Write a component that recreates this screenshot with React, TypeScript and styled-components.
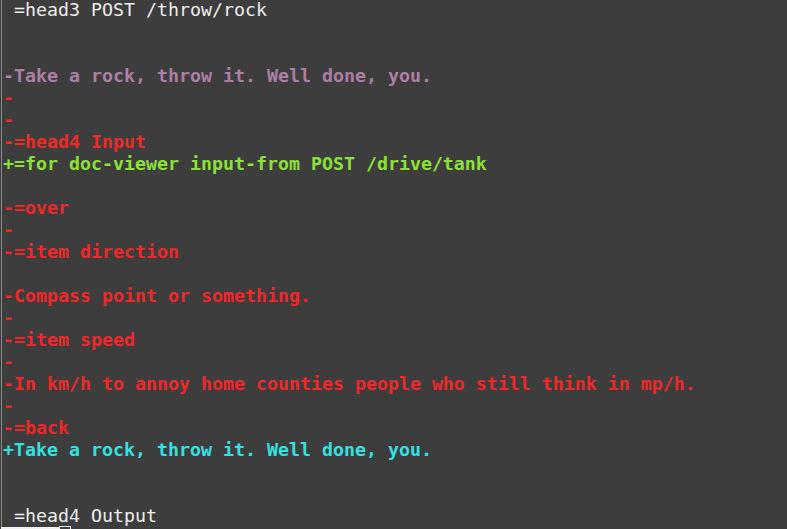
import React from "react";
import styled, { createGlobalStyle } from "styled-components";

const Global = createGlobalStyle`
  html, body { margin: 0; padding: 0; background: #3d3d3d; overflow: hidden; }
  #root { height: 529px; }
`;

const Screen = styled.div`
  width: 787px;
  height: 529px;
  box-sizing: border-box;
  background: #3d3d3d;
  padding-left: 1px;
  overflow: hidden;
`;

const Pane = styled.div`
  height: 100%;
  border-left: 1px solid #8c8c8c;
  padding-left: 1px;
  display: flex;
  flex-direction: column;
`;

const Lines = styled.div`
  display: flex;
  flex-direction: column;
  margin-top: -1px;
`;

type Kind = "ctx" | "delPurple" | "del" | "addGreen" | "addCyan" | "blank";

const colors: Record<Kind, string> = {
  ctx: "#eeeeec",
  delPurple: "#ad7fa8",
  del: "#ef2929",
  addGreen: "#8ae234",
  addCyan: "#34e2e2",
  blank: "#eeeeec",
};

const Line = styled.div<{ $kind: Kind }>`
  height: 22px;
  line-height: 22px;
  font-family: "DejaVu Sans Mono", "Liberation Mono", monospace;
  font-size: 18.27px;
  white-space: pre;
  color: ${(p) => colors[p.$kind]};
  font-weight: ${(p) => (p.$kind === "ctx" || p.$kind === "blank" ? 400 : 700)};
  flex-shrink: 0;
`;

const StatusRow = styled.div`
  display: flex;
  align-items: flex-end;
  height: 3px;
  margin-top: -1px;
  margin-left: -2px;
  flex-shrink: 0;
`;

const StatusBar = styled.div`
  width: 58px;
  height: 2px;
  background: #f0f0f0;
`;

const CursorBox = styled.div`
  width: 12px;
  height: 3px;
  border: 1px solid #f0f0f0;
  border-bottom: none;
  box-sizing: border-box;
`;

const lines: [Kind, string][] = [
  ["ctx", " =head3 POST /throw/rock"],
  ["blank", ""],
  ["blank", ""],
  ["delPurple", "-Take a rock, throw it. Well done, you."],
  ["del", "-"],
  ["del", "-"],
  ["del", "-=head4 Input"],
  ["addGreen", "+=for doc-viewer input-from POST /drive/tank"],
  ["blank", ""],
  ["del", "-=over"],
  ["del", "-"],
  ["del", "-=item direction"],
  ["blank", ""],
  ["del", "-Compass point or something."],
  ["del", "-"],
  ["del", "-=item speed"],
  ["del", "-"],
  ["del", "-In km/h to annoy home counties people who still think in mp/h."],
  ["del", "-"],
  ["del", "-=back"],
  ["addCyan", "+Take a rock, throw it. Well done, you."],
  ["blank", ""],
  ["blank", ""],
  ["ctx", " =head4 Output"],
];

export default function App() {
  return (
    <>
      <Global />
      <Screen>
        <Pane>
          <Lines>
            {lines.map(([k, t], i) => (
              <Line key={i} $kind={k}>
                {t || " "}
              </Line>
            ))}
          </Lines>
          <StatusRow>
            <StatusBar />
            <CursorBox />
          </StatusRow>
        </Pane>
      </Screen>
    </>
  );
}
